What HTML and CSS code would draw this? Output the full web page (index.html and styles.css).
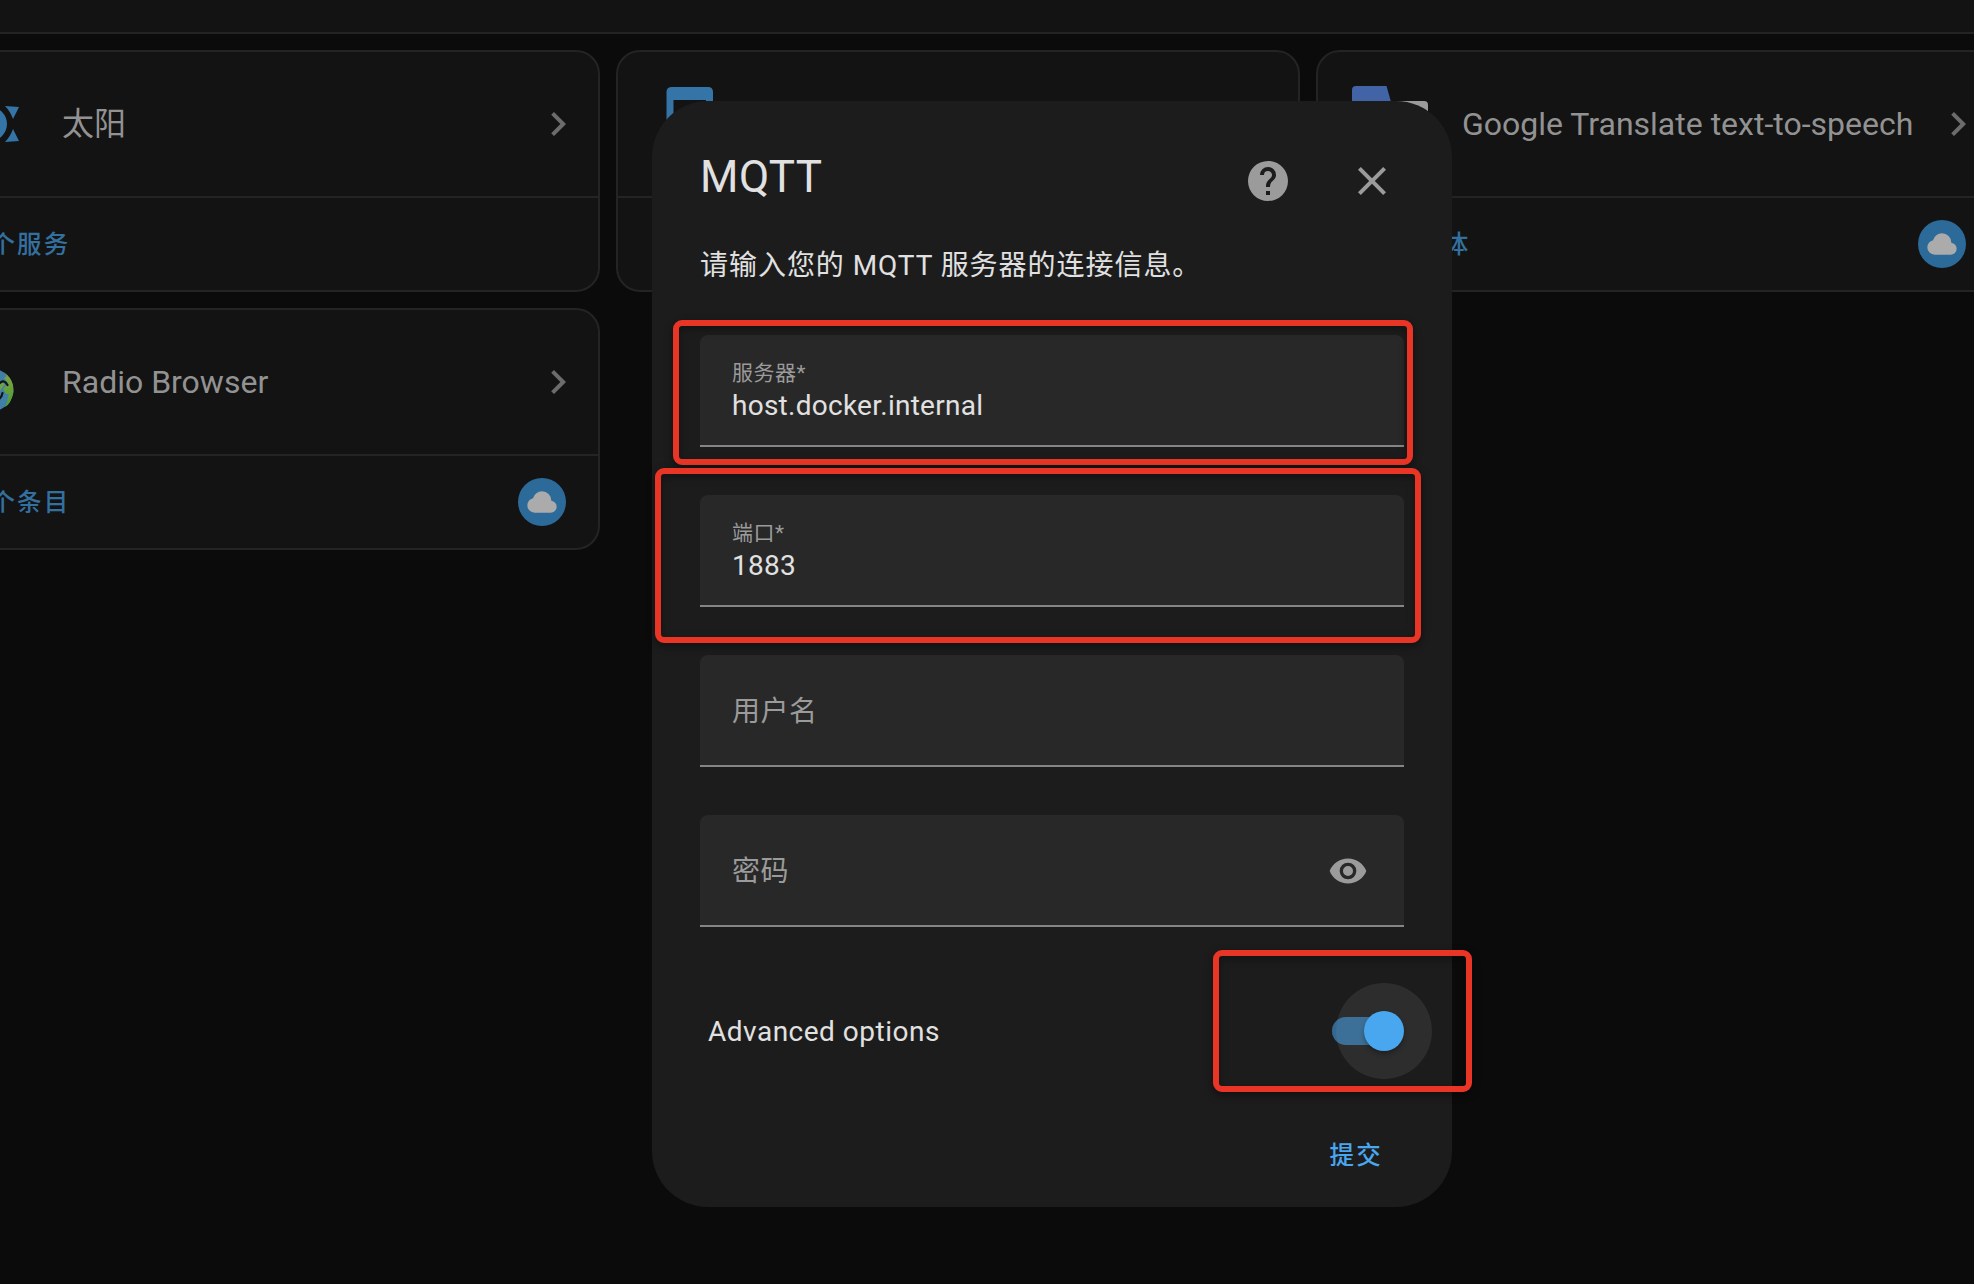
FILE: index.html
```html
<!DOCTYPE html>
<html lang="zh-CN">
<head>
<meta charset="utf-8">
<title>Home Assistant</title>
<link rel="stylesheet" href="styles.css">
</head>
<body>
<header class="toolbar"></header>
<main class="integrations">
  <section class="card">
    <div class="card-head">
      <svg class="logo" viewBox="0 0 80 80"><g fill="#3474a6"><circle cx="40" cy="40" r="17"/><path d="M55 22L69 23L63 35Q60 27 55 22ZM55 58L69 57L63 45Q60 53 55 58Z"/></g></svg>
      <h2>太阳</h2>
      <svg class="chevron" viewBox="0 0 24 24"><path d="M8.59 16.58L13.17 12L8.59 7.41L10 6L16 12L10 18Z"/></svg>
    </div>
    <div class="card-foot"><a>1 个服务</a></div>
  </section>
  <section class="card">
    <div class="card-head">
      <svg class="logo" viewBox="0 0 80 80"><path fill="#3474a6" fill-rule="evenodd" d="M22 3H58Q63 3 63 8V72Q63 77 58 77H22Q16.500 77 16.500 72V8Q16.500 3 22 3ZM23.500 16V64H56V16Z"/></svg>
    </div>
    <div class="card-foot"></div>
  </section>
  <section class="card">
    <div class="card-head">
      <svg class="logo" viewBox="0 0 80 80"><path fill="#9b9b9b" d="M30 17H74Q78 17 78 21V74Q78 78 74 78H48Z"/><path fill="#4263a6" d="M6 2H36.500L54 64H6Q2 64 2 60V6Q2 2 6 2Z"/></svg>
      <h2>Google Translate text-to-speech</h2>
      <svg class="chevron" viewBox="0 0 24 24"><path d="M8.590 16.580L13.170 12L8.590 7.410L10 6L16 12L10 18Z"/></svg>
    </div>
    <div class="card-foot"><a>1 个实体</a>
      <span class="cloud"><svg viewBox="0 0 24 24"><path d="M6.500 20Q4.220 20 2.610 18.430 1 16.850 1 14.580 1 12.630 2.170 11.100 3.350 9.570 5.250 9.150 5.880 6.850 7.750 5.430 9.630 4 12 4 14.930 4 16.960 6.040 19 8.070 19 11 20.730 11.200 21.860 12.500 23 13.780 23 15.500 23 17.380 21.690 18.690 20.380 20 18.500 20Z"/></svg></span>
    </div>
  </section>
  <section class="card">
    <div class="card-head">
      <svg class="logo" viewBox="0 0 80 80">
        <defs><linearGradient id="land" x1="0" y1="0" x2="0" y2="1"><stop offset="0" stop-color="#7fa543"/><stop offset="1" stop-color="#4f9a35"/></linearGradient></defs>
        <circle cx="42.400" cy="48" r="21" fill="#3f7fa8"/>
        <path fill="url(#land)" d="M54 30.500Q61 35 63 43L63.500 50Q61 62 55 65Q58 59 58.500 52L56 52L53 47L58 41L54 36L57 34Z"/>
        <path fill="#6fa04a" d="M48 38L55 42L50 49Z"/>
        <path fill="none" stroke="#101414" stroke-width="2.200" stroke-linecap="round" d="M50 41Q54 37 57.500 43M38 60Q51 60 52.500 51"/>
      </svg>
      <h2>Radio Browser</h2>
      <svg class="chevron" viewBox="0 0 24 24"><path d="M8.590 16.580L13.170 12L8.590 7.410L10 6L16 12L10 18Z"/></svg>
    </div>
    <div class="card-foot"><a>1 个条目</a>
      <span class="cloud"><svg viewBox="0 0 24 24"><path d="M6.500 20Q4.220 20 2.610 18.430 1 16.850 1 14.580 1 12.630 2.170 11.100 3.350 9.570 5.250 9.150 5.880 6.850 7.750 5.430 9.630 4 12 4 14.930 4 16.960 6.040 19 8.070 19 11 20.730 11.200 21.860 12.500 23 13.780 23 15.500 23 17.380 21.690 18.690 20.380 20 18.500 20Z"/></svg></span>
    </div>
  </section>
</main>

<div class="overlay">
  <div class="dialog">
    <div class="dialog-head">
      <h1>MQTT</h1>
      <svg class="action" viewBox="0 0 24 24"><path d="M15.070 11.250L14.170 12.170C13.450 12.890 13 13.500 13 15H11V14.500C11 13.390 11.450 12.390 12.170 11.670L13.410 10.410C13.780 10.050 14 9.550 14 9C14 7.890 13.100 7 12 7A2 2 0 0 0 10 9H8A4 4 0 0 1 12 5A4 4 0 0 1 16 9C16 9.880 15.640 10.670 15.070 11.250M13 19H11V17H13M12 2A10 10 0 0 0 2 12A10 10 0 0 0 12 22A10 10 0 0 0 22 12C22 6.470 17.500 2 12 2Z"/></svg>
      <svg class="action" viewBox="0 0 24 24"><path d="M19 6.410L17.590 5L12 10.590L6.410 5L5 6.410L10.590 12L5 17.590L6.410 19L12 13.410L17.590 19L19 17.590L13.410 12Z"/></svg>
    </div>
    <p class="intro">请输入您的 MQTT 服务器的连接信息。</p>
    <div class="fields">
      <div class="field filled"><label>服务器*</label><span>host.docker.internal</span></div>
      <div class="field filled"><label>端口*</label><span>1883</span></div>
      <div class="field"><label>用户名</label></div>
      <div class="field"><label>密码</label>
        <svg class="eye" viewBox="0 0 24 24"><path d="M12 9A3 3 0 0 0 9 12A3 3 0 0 0 12 15A3 3 0 0 0 15 12A3 3 0 0 0 12 9M12 17A5 5 0 0 1 7 12A5 5 0 0 1 12 7A5 5 0 0 1 17 12A5 5 0 0 1 12 17M12 4.500C7 4.500 2.730 7.610 1 12C2.730 16.390 7 19.500 12 19.500C17 19.500 21.270 16.390 23 12C21.270 7.610 17 4.500 12 4.500Z"/></svg>
      </div>
    </div>
    <div class="option">
      <span>Advanced options</span>
      <span class="switch"><i class="ripple"></i><i class="track"></i><i class="thumb"></i></span>
    </div>
    <div class="dialog-foot"><button class="submit">提交</button></div>
  </div>
</div>
<div class="mark mark-host"></div>
<div class="mark mark-port"></div>
<div class="mark mark-switch"></div>
</body>
</html>
```
FILE: styles.css
```css
* { box-sizing: border-box; }
body {
  margin: 0;
  height: 1284px;
  overflow: hidden;
  background: #0b0b0b;
  color: #e1e1e1;
  font-family: Roboto, "Noto Sans CJK SC", sans-serif;
  font-size: 28px;
}
h1, h2, p { margin: 0; font-weight: 400; }
svg { display: block; flex: none; }

.toolbar { height: 34px; background: #131313; border-bottom: 2px solid #242424; }
.integrations {
  display: grid;
  grid-template-columns: repeat(3, 684px);
  gap: 16px;
  margin: 16px 0 0 -84px;
}
.card {
  height: 242px;
  background: #131313;
  border: 2px solid #242424;
  border-radius: 24px;
}
.card-head {
  display: flex;
  align-items: center;
  height: 144px;
  padding: 0 16px 0 32px;
}
.logo { width: 80px; height: 80px; }
.card-head h2 {
  flex: 1;
  margin-left: 32px;
  font-size: 32px;
  line-height: 48px;
  color: #929292;
  white-space: nowrap;
}
.chevron { width: 48px; height: 48px; fill: #6c6c6c; }
.card-foot {
  display: flex;
  align-items: center;
  justify-content: space-between;
  height: 94px;
  padding: 0 32px 0 48px;
  border-top: 2px solid #242424;
  color: #34709f;
  font-size: 24.5px;
  font-weight: 500;
  letter-spacing: 2.19px;
}
.card-foot a { padding-bottom: 4px; }
.cloud {
  display: grid;
  place-items: center;
  width: 48px;
  height: 48px;
  border-radius: 50%;
  background: #2c6a99;
}
.cloud svg { width: 32px; height: 32px; fill: #ababab; }

.overlay {
  position: absolute;
  inset: 0;
  display: flex;
  justify-content: center;
  align-items: flex-start;
  padding: 101px 0 0 130px;
}
.dialog {
  width: 800px;
  height: 1106px;
  padding: 32px 48px 0;
  border-radius: 56px;
  background: #1c1c1c;
}
.dialog-head { display: flex; align-items: center; height: 96px; padding-right: 8px; }
.dialog-head h1 {
  flex: 1;
  font-size: 44px;
  line-height: 64px;
  padding-bottom: 8px;
  letter-spacing: 0.5px;
}
.action { width: 48px; height: 48px; fill: #9b9b9b; }
.action + .action { margin-left: 56px; }
.intro { height: 106px; padding-top: 17px; line-height: 40px; letter-spacing: 0.96px; }
.fields { display: grid; gap: 48px; }
.field {
  display: flex;
  align-items: center;
  justify-content: space-between;
  height: 112px;
  padding: 0 36px 0 32px;
  border-bottom: 2px solid #858585;
  border-radius: 8px 8px 0 0;
  background: #282828;
  letter-spacing: 0.5px;
}
.field label { padding-bottom: 2px; color: #9b9b9b; }
.filled { flex-direction: column; align-items: flex-start; justify-content: flex-start; padding-top: 23px; }
.filled label { padding: 0; font-size: 21px; line-height: 30px; letter-spacing: 0.5px; }
.filled span { line-height: 36px; letter-spacing: 0.26px; }
.eye { width: 40px; height: 40px; margin-top: 2px; fill: #9b9b9b; }
.option {
  display: flex;
  align-items: center;
  justify-content: space-between;
  height: 96px;
  margin-top: 56px;
  padding-left: 8px;
  letter-spacing: 0.5px;
}
.switch { position: relative; width: 72px; height: 40px; }
.switch i { position: absolute; }
.ripple { left: 4px; top: -28px; width: 96px; height: 96px; border-radius: 50%; background: #2d2d2d; }
.track { left: 0; top: 6px; width: 64px; height: 28px; border-radius: 14px; background: rgba(74, 168, 240, 0.55); }
.thumb { right: 0; top: 0; width: 40px; height: 40px; border-radius: 50%; background: #49a7ef; box-shadow: 0 3px 5px rgba(0, 0, 0, 0.3); }
.dialog-foot { display: flex; justify-content: flex-end; padding: 38px 5px 0 0; }
.submit {
  height: 72px;
  padding: 0 16px;
  border: 0;
  background: none;
  color: #49a7ef;
  font: 500 24.5px Roboto, "Noto Sans CJK SC", sans-serif;
  letter-spacing: 2.19px;
}

/* highlight frames floating above the dialog */
.mark {
  position: absolute;
  border: 6px solid #e83526;
  border-radius: 9px;
  box-shadow: 0 3px 8px rgba(0, 0, 0, 0.45), inset 0 3px 8px rgba(0, 0, 0, 0.35);
}
.mark-host { left: 673px; top: 320px; width: 740px; height: 145px; }
.mark-port { left: 655px; top: 468px; width: 766px; height: 175px; }
.mark-switch { left: 1213px; top: 950px; width: 259px; height: 142px; }
```
